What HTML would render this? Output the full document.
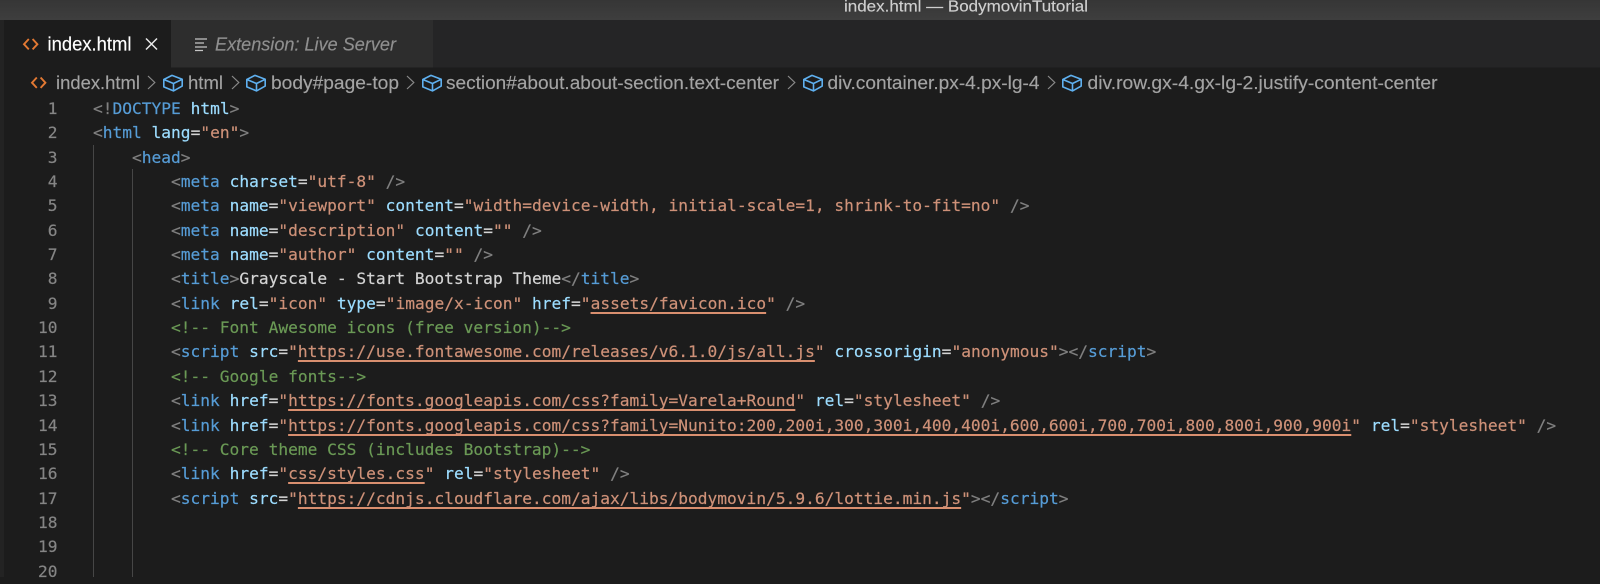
<!DOCTYPE html>
<html lang="en"><head><meta charset="utf-8"><title>index.html — BodymovinTutorial</title>
<style>
html,body{margin:0;padding:0;background:#1c1c1c;width:1600px;height:577px;overflow:hidden}
#chrome{position:absolute;left:0;top:0}
#chrome text{font-family:"Liberation Sans",sans-serif;stroke-width:.15px}
#nums,#code{position:absolute;top:96.9px;font:16.2px/24.36px "DejaVu Sans Mono","Liberation Mono",monospace;white-space:pre;-webkit-text-stroke:.2px}
#nums{left:0;width:57.5px;text-align:right;color:#858585}
#code{left:93px;color:#d4d4d4;letter-spacing:.008px}
.g{position:absolute;width:1px;background:#464646;bottom:0}
.b{color:#808080}.t{color:#569cd6}.a{color:#9cdcfe}.s{color:#ce9178}.c{color:#6a9955}
.u{color:#ce9178;text-decoration:underline;text-decoration-color:#d98f6f;text-decoration-thickness:1.5px;text-underline-offset:3px;text-decoration-skip-ink:none}
</style></head><body>
<svg id="chrome" width="1600" height="577" viewBox="0 0 1600 577" xmlns="http://www.w3.org/2000/svg">
<defs>
<linearGradient id="tb" x1="0" y1="0" x2="0" y2="1"><stop offset="0" stop-color="#363636"/><stop offset="1" stop-color="#3e3e3e"/></linearGradient>
<g id="cube" fill="none" stroke="#5fb0ef" stroke-width="1.6" stroke-linejoin="round"><path d="M9 .9 19.2 4.8V11.6L10.5 16.4 .8 12.4V5Z"/><path d="M.8 5 10.5 9 19.2 4.8M10.5 9V16.4"/></g>
<path id="chev" d="M0 0 6.8 6.5 0 13" fill="none" stroke="#8a8a8a" stroke-width="1.2"/>
<g id="code-ic" fill="none" stroke="#e37933" stroke-width="1.9"><path d="M4.8 0 0 5.2 4.8 10.4M8.6 0 13.4 5.2 8.6 10.4"/></g>
</defs>
<rect width="1600" height="20" fill="url(#tb)"/>
<rect y="20" width="1600" height="47.5" fill="#252526"/>
<rect x="0" y="20" width="4" height="557" fill="#232323"/>
<rect x="4" y="20" width="167" height="48" fill="#1c1c1c"/>
<rect x="171" y="20" width="262" height="47.5" fill="#2d2d2d"/>
<text x="844" y="11.5" font-size="16" fill="#cfcfcf" stroke="#cfcfcf" textLength="244" lengthAdjust="spacingAndGlyphs">index.html — BodymovinTutorial</text>
<use href="#code-ic" x="24" y="39"/>
<text x="47.5" y="50.5" font-size="19" fill="#ffffff" stroke="#ffffff" textLength="84" lengthAdjust="spacingAndGlyphs">index.html</text>
<path d="M146 38.5 157 49.5M157 38.5 146 49.5" stroke="#e8e8e8" stroke-width="1.5" fill="none"/>
<path d="M195 39H207M195 43H204M195 47H207M195 50.5H203" stroke="#c5c5c5" stroke-width="1.3" fill="none"/>
<text x="215" y="50.5" font-size="18" font-style="italic" fill="#8f8f8f" stroke="#8f8f8f" textLength="181" lengthAdjust="spacingAndGlyphs">Extension: Live Server</text>
<use href="#code-ic" x="32" y="77.5"/>
<g font-size="18.8" fill="#a3a3a3" stroke="#a3a3a3">
<text x="56" y="89" textLength="84" lengthAdjust="spacingAndGlyphs">index.html</text>
<text x="188" y="89" textLength="35" lengthAdjust="spacingAndGlyphs">html</text>
<text x="271" y="89" textLength="128" lengthAdjust="spacingAndGlyphs">body#page-top</text>
<text x="446" y="89" textLength="333" lengthAdjust="spacingAndGlyphs">section#about.about-section.text-center</text>
<text x="827.5" y="89" textLength="212" lengthAdjust="spacingAndGlyphs">div.container.px-4.px-lg-4</text>
<text x="1087.5" y="89" textLength="350" lengthAdjust="spacingAndGlyphs">div.row.gx-4.gx-lg-2.justify-content-center</text>
</g>
<use href="#chev" x="148" y="76"/><use href="#chev" x="232" y="76"/><use href="#chev" x="407" y="76"/><use href="#chev" x="788" y="76"/><use href="#chev" x="1048" y="76"/>
<use href="#cube" x="163" y="74.5"/><use href="#cube" x="246" y="74.5"/><use href="#cube" x="422" y="74.5"/><use href="#cube" x="803" y="74.5"/><use href="#cube" x="1062" y="74.5"/>
</svg>
<div class="g" style="left:93px;top:145px"></div>
<div class="g" style="left:132px;top:169px"></div>
<div id="nums">1
2
3
4
5
6
7
8
9
10
11
12
13
14
15
16
17
18
19
20</div>
<div id="code"><span class="b">&lt;!</span><span class="t">DOCTYPE</span> <span class="a">html</span><span class="b">&gt;</span>
<span class="b">&lt;</span><span class="t">html</span> <span class="a">lang</span>=<span class="s">"en"</span><span class="b">&gt;</span>
    <span class="b">&lt;</span><span class="t">head</span><span class="b">&gt;</span>
        <span class="b">&lt;</span><span class="t">meta</span> <span class="a">charset</span>=<span class="s">"utf-8"</span> <span class="b">/&gt;</span>
        <span class="b">&lt;</span><span class="t">meta</span> <span class="a">name</span>=<span class="s">"viewport"</span> <span class="a">content</span>=<span class="s">"width=device-width, initial-scale=1, shrink-to-fit=no"</span> <span class="b">/&gt;</span>
        <span class="b">&lt;</span><span class="t">meta</span> <span class="a">name</span>=<span class="s">"description"</span> <span class="a">content</span>=<span class="s">""</span> <span class="b">/&gt;</span>
        <span class="b">&lt;</span><span class="t">meta</span> <span class="a">name</span>=<span class="s">"author"</span> <span class="a">content</span>=<span class="s">""</span> <span class="b">/&gt;</span>
        <span class="b">&lt;</span><span class="t">title</span><span class="b">&gt;</span>Grayscale - Start Bootstrap Theme<span class="b">&lt;/</span><span class="t">title</span><span class="b">&gt;</span>
        <span class="b">&lt;</span><span class="t">link</span> <span class="a">rel</span>=<span class="s">"icon"</span> <span class="a">type</span>=<span class="s">"image/x-icon"</span> <span class="a">href</span>=<span class="s">"</span><span class="u">assets/favicon.ico</span><span class="s">"</span> <span class="b">/&gt;</span>
        <span class="c">&lt;!-- Font Awesome icons (free version)--&gt;</span>
        <span class="b">&lt;</span><span class="t">script</span> <span class="a">src</span>=<span class="s">"</span><span class="u">https://use.fontawesome.com/releases/v6.1.0/js/all.js</span><span class="s">"</span> <span class="a">crossorigin</span>=<span class="s">"anonymous"</span><span class="b">&gt;&lt;/</span><span class="t">script</span><span class="b">&gt;</span>
        <span class="c">&lt;!-- Google fonts--&gt;</span>
        <span class="b">&lt;</span><span class="t">link</span> <span class="a">href</span>=<span class="s">"</span><span class="u">https://fonts.googleapis.com/css?family=Varela+Round</span><span class="s">"</span> <span class="a">rel</span>=<span class="s">"stylesheet"</span> <span class="b">/&gt;</span>
        <span class="b">&lt;</span><span class="t">link</span> <span class="a">href</span>=<span class="s">"</span><span class="u">https://fonts.googleapis.com/css?family=Nunito:200,200i,300,300i,400,400i,600,600i,700,700i,800,800i,900,900i</span><span class="s">"</span> <span class="a">rel</span>=<span class="s">"stylesheet"</span> <span class="b">/&gt;</span>
        <span class="c">&lt;!-- Core theme CSS (includes Bootstrap)--&gt;</span>
        <span class="b">&lt;</span><span class="t">link</span> <span class="a">href</span>=<span class="s">"</span><span class="u">css/styles.css</span><span class="s">"</span> <span class="a">rel</span>=<span class="s">"stylesheet"</span> <span class="b">/&gt;</span>
        <span class="b">&lt;</span><span class="t">script</span> <span class="a">src</span>=<span class="s">"</span><span class="u">https://cdnjs.cloudflare.com/ajax/libs/bodymovin/5.9.6/lottie.min.js</span><span class="s">"</span><span class="b">&gt;&lt;/</span><span class="t">script</span><span class="b">&gt;</span></div>
</body></html>
